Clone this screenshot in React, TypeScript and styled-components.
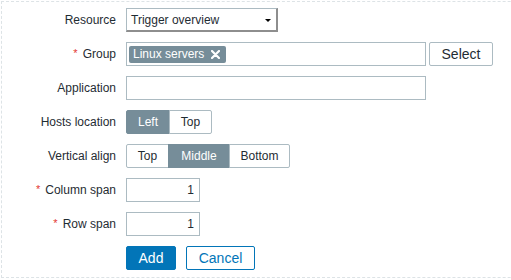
import React from 'react';
import styled, { createGlobalStyle } from 'styled-components';

const GlobalStyle = createGlobalStyle`
    html, body {
        margin: 0;
        padding: 0;
        overflow: hidden;
        background: #ffffff;
    }
    body {
        font-family: 'Liberation Sans', Arial, sans-serif;
        font-size: 12px;
        color: #1f2c33;
    }
`;

const Page = styled.div`
    padding: 1px 0 0 1px;
`;

const FormBox = styled.div`
    width: 620px;
    border: 1px dashed #dde3e6;
    padding: 6px 0 7px 0;
    box-sizing: border-box;
`;

const FormGrid = styled.div`
    display: grid;
    grid-template-columns: 114px auto;
    column-gap: 10px;
    row-gap: 10px;
    align-items: center;
`;

const Label = styled.label`
    text-align: right;
    line-height: 24px;
    white-space: nowrap;
`;

const Star = styled.span`
    color: #e33734;
    font-size: 11px;
    margin-right: 5px;
    position: relative;
    top: -1px;
`;

const Field = styled.div`
    display: flex;
    align-items: center;
    gap: 3px;
    height: 24px;
`;

const SelectBox = styled.div`
    position: relative;
    width: 152px;
    height: 24px;
    box-sizing: border-box;
    border: 1px solid #acbbc2;
    border-right: 2px solid #8e8e8e;
    border-bottom: 2px solid #8e8e8e;
    background: #fff;
    padding-left: 4px;
    line-height: 22px;
    font-size: 12px;
`;

const Arrow = styled.span`
    position: absolute;
    right: 5px;
    top: 10px;
    width: 0;
    height: 0;
    border-left: 3px solid transparent;
    border-right: 3px solid transparent;
    border-top: 3px solid #000;
`;

const TextBox = styled.div<{ $w: number; $align?: string }>`
    width: ${(p) => p.$w}px;
    height: 24px;
    box-sizing: border-box;
    border: 1px solid #acbbc2;
    background: #fff;
    padding: 0 5px;
    line-height: 22px;
    text-align: ${(p) => p.$align || 'left'};
    display: flex;
    align-items: center;
    justify-content: ${(p) => (p.$align === 'right' ? 'flex-end' : 'flex-start')};
`;

const MultiBox = styled.div`
    width: 300px;
    height: 24px;
    box-sizing: border-box;
    border: 1px solid #acbbc2;
    background: #fff;
    padding: 2px 2px;
    display: flex;
    align-items: center;
`;

const Tag = styled.span`
    display: inline-flex;
    align-items: center;
    gap: 7px;
    height: 17px;
    padding: 0 6px 0 4px;
    background: #768d99;
    color: #fff;
    border-radius: 2px;
    font-size: 12px;
`;

const PlainButton = styled.button`
    height: 24px;
    width: 64px;
    box-sizing: border-box;
    border: 1px solid #acbbc2;
    border-radius: 2px;
    background: #fff;
    color: #1f2c33;
    font-family: 'Liberation Sans', Arial, sans-serif;
    font-size: 14px;
    padding: 0;
`;

const Segmented = styled.div`
    display: flex;
    height: 24px;
`;

const Segment = styled.span<{ $w: number; $active?: boolean }>`
    width: ${(p) => p.$w}px;
    height: 24px;
    box-sizing: border-box;
    border: 1px solid ${(p) => (p.$active ? '#768d99' : '#acbbc2')};
    margin-left: -1px;
    background: ${(p) => (p.$active ? '#768d99' : '#fff')};
    color: ${(p) => (p.$active ? '#fff' : '#1f2c33')};
    display: flex;
    align-items: center;
    justify-content: center;
    font-size: 12px;
    &:first-child {
        margin-left: 0;
        border-radius: 2px 0 0 2px;
    }
    &:last-child {
        border-radius: 0 2px 2px 0;
    }
`;

const Actions = styled.div`
    display: flex;
    gap: 10px;
    height: 24px;
`;

const ActionButton = styled.button<{ $primary?: boolean; $w: number }>`
    width: ${(p) => p.$w}px;
    height: 24px;
    box-sizing: border-box;
    border: 1px solid #0275b8;
    border-radius: 2px;
    background: ${(p) => (p.$primary ? '#0275b8' : '#fff')};
    color: ${(p) => (p.$primary ? '#fff' : '#0275b8')};
    font-family: 'Liberation Sans', Arial, sans-serif;
    font-size: 14px;
    padding: 0;
`;

const CloseIcon = () => (
    <svg width="9" height="9" viewBox="0 0 9 9">
        <path d="M1 1 L8 8 M8 1 L1 8" stroke="#fff" strokeWidth="2.2" strokeLinecap="round" />
    </svg>
);

type Seg = { text: string; w: number; active?: boolean };

const hostsLocation: Seg[] = [
    { text: 'Left', w: 44, active: true },
    { text: 'Top', w: 43 }
];

const verticalAlign: Seg[] = [
    { text: 'Top', w: 43 },
    { text: 'Middle', w: 62, active: true },
    { text: 'Bottom', w: 61 }
];

export default function App() {
    const renderSegments = (list: Seg[]) =>
        list.map((s, i) => (
            <Segment key={i} $w={s.w} $active={s.active}>
                {s.text}
            </Segment>
        ));

    return (
        <Page>
            <GlobalStyle />
            <FormBox>
                <FormGrid>
                    <Label>Resource</Label>
                    <Field>
                        <SelectBox>
                            Trigger overview
                            <Arrow />
                        </SelectBox>
                    </Field>

                    <Label>
                        <Star>*</Star>Group
                    </Label>
                    <Field>
                        <MultiBox>
                            <Tag>
                                Linux servers
                                <CloseIcon />
                            </Tag>
                        </MultiBox>
                        <PlainButton>Select</PlainButton>
                    </Field>

                    <Label>Application</Label>
                    <Field>
                        <TextBox $w={300} />
                    </Field>

                    <Label>Hosts location</Label>
                    <Field>
                        <Segmented>{renderSegments(hostsLocation)}</Segmented>
                    </Field>

                    <Label>Vertical align</Label>
                    <Field>
                        <Segmented>{renderSegments(verticalAlign)}</Segmented>
                    </Field>

                    <Label>
                        <Star>*</Star>Column span
                    </Label>
                    <Field>
                        <TextBox $w={74} $align="right">
                            1
                        </TextBox>
                    </Field>

                    <Label>
                        <Star>*</Star>Row span
                    </Label>
                    <Field>
                        <TextBox $w={74} $align="right">
                            1
                        </TextBox>
                    </Field>

                    <span />
                    <Actions>
                        <ActionButton $primary $w={50}>
                            Add
                        </ActionButton>
                        <ActionButton $w={69}>Cancel</ActionButton>
                    </Actions>
                </FormGrid>
            </FormBox>
        </Page>
    );
}
